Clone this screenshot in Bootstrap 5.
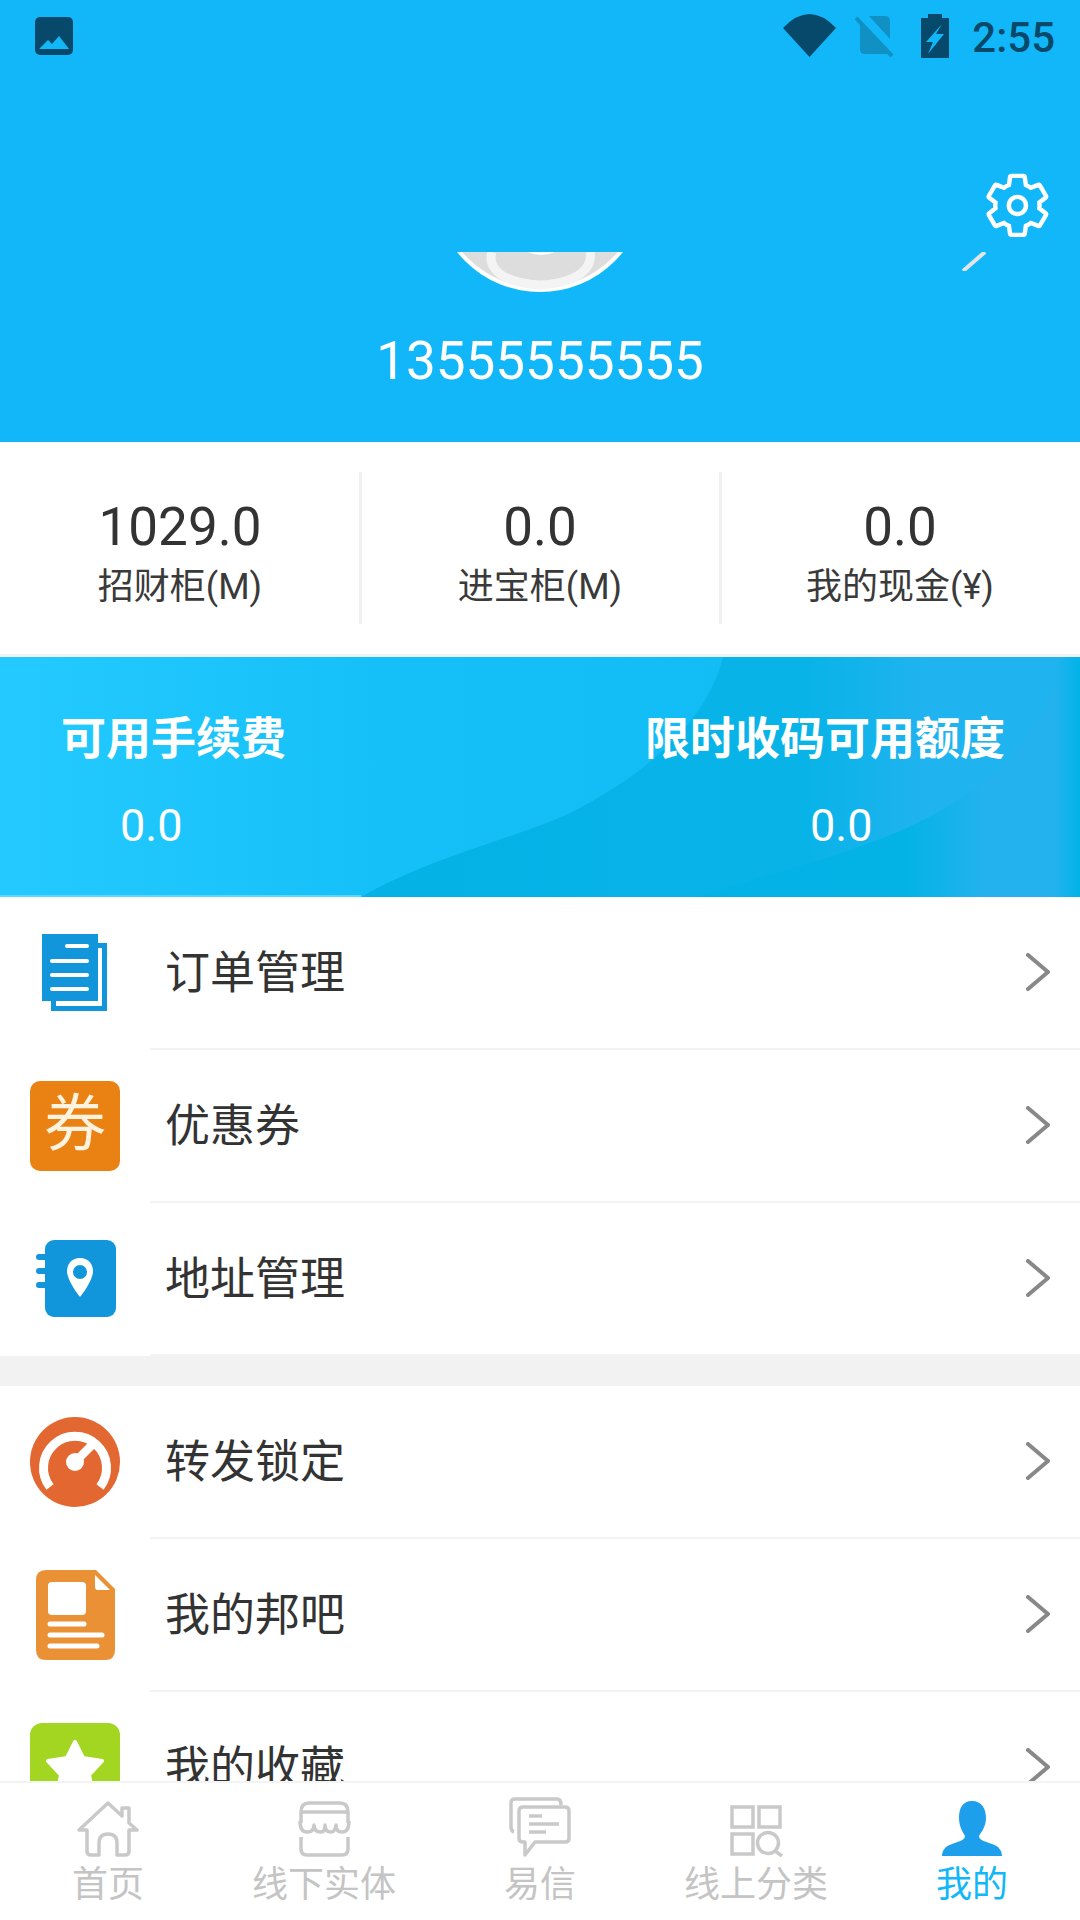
<!DOCTYPE html>
<html lang="zh-CN">
<head>
  <meta charset="UTF-8">
  <title>我的</title>
  <link href="https://cdn.jsdelivr.net/npm/bootstrap@5.3.2/dist/css/bootstrap.min.css" rel="stylesheet">
  <style>
    body {
      font-family: Roboto, "Noto Sans CJK SC", sans-serif;
      background-color: #fff;
      color: #333;
    }
    svg { display: block; }
    .app-page { width: 1080px; height: 1920px; }
    .app-scroll { height: 1781px; }

    .profile-head { height: 442px; background-color: #12b7f9; }
    .status-row { height: 72px; padding: 14px 25px 0 35px; }
    .status-photo { margin-top: 3px; }
    .status-time { font-size: 42px; font-weight: 500; line-height: 44px; color: #07496a; margin-left: 23px; margin-top: 2px; }
    .status-icons { gap: 19px; }
    .status-sim { margin-right: 8px; }
    .avatar-crop { width: 166px; margin-top: 180px; }
    .phone-text { margin-top: 37px; font-size: 53px; line-height: 64px; font-weight: 400; color: #fff; }
    .gear-icon { left: 982px; top: 170px; }
    .slash-mark { left: 962px; top: 252px; }

    .stat-wrap { height: 212px; padding-top: 30px; }
    .stat-cell { height: 152px; padding-top: 25px; text-align: center; }
    .stat-line::after { content: ""; position: absolute; top: 0; right: -2px; width: 3px; height: 152px; background-color: #f0f0f0; }
    .stat-num { font-size: 53px; line-height: 60px; color: #333; }
    .stat-label { font-size: 36px; line-height: 44px; margin-top: 8px; color: #3a3a3a; }
    .gap-strip { height: 3px; background-color: #f2f2f2; }

    .fee-banner { height: 240px; color: #fff; overflow: hidden; }
    .fee-art { left: 0; top: 0; }
    .fee-left { padding-left: 61px; }
    .fee-right { padding-right: 75px; }
    .fee-body { padding-top: 53px; }
    .fee-title { font-size: 45px; line-height: 60px; font-weight: 700; }
    .fee-value { font-size: 45px; line-height: 60px; margin-top: 26px; font-weight: 400; }
    .fee-left .fee-value { margin-left: 59px; }
    .fee-right .fee-value { margin-left: 165px; }

    .menu-row { height: 153px; padding: 0; border: 0; border-radius: 0 !important; }
    .menu-icon { width: 150px; flex: 0 0 150px; padding-bottom: 2px; }
    .menu-icon-shift { margin-left: 2px; }
    .menu-body { height: 153px; padding: 0 30px 2px 15px; border-bottom: 2px solid #f3f3f3; font-size: 45px; color: #333; }
    .menu-text { padding-top: 4px; }
    .coupon-icon { width: 90px; height: 90px; border-radius: 10px; background-color: #e98212; color: #fff3e0; font-size: 62px; line-height: 88px; text-align: center; font-weight: 400; }
    .menu-gap { height: 30px; background-color: #f2f2f2; }

    .tab-strip { height: 139px; border-top: 2px solid #f3f3f3; background-color: #fff; }
    .tab-item { width: 216px; height: 137px; color: #c4c4c4; font-size: 36px; line-height: 40px; }
    .tab-item.is-active { color: #12b7f9; }
    .tab-glyph { height: 64px; margin-top: 10px; margin-bottom: 8px; filter: blur(.4px); }
  </style>
</head>
<body>

<div class="app-page d-flex flex-column overflow-hidden">
  <div class="app-scroll overflow-hidden">

    <div class="profile-head position-relative">
      <div class="status-row d-flex justify-content-between align-items-start">
        <svg class="status-photo" width="38" height="38" viewBox="0 0 38 38"><rect width="38" height="38" rx="5" fill="#07496a"/><path d="M4 32 13 23 17 27 24 19 34 32Z" fill="#12b7f9"/></svg>
        <div class="d-flex align-items-start">
          <div class="status-icons d-flex">
            <svg width="53" height="43" viewBox="0 0 53 43"><path d="M0 14Q26.500-14 53 14L26.500 43Z" fill="#07496a"/></svg>
            <svg class="status-sim" width="39" height="44" viewBox="0 0 39 44"><path d="M12 2H30Q35 2 35 7V40H10Q5 40 5 35V9Z" fill="#1190c4"/><path d="M6 0 41 38" stroke="#12b7f9" stroke-width="9"/><path d="M1 4 37 42" stroke="#1190c4" stroke-width="4"/></svg>
            <svg width="28" height="44" viewBox="0 0 28 44"><path d="M7 0H21V4H28V44H0V4H7Z" fill="#07496a"/><path d="M21 10 5 28H12L7 40 23 20H15Z" fill="#12b7f9"/></svg>
          </div>
          <span class="status-time">2:55</span>
        </div>
      </div>

      <div class="avatar-crop mx-auto">
        <svg width="166" height="40" viewBox="0 0 166 40">
          <circle cx="83" cy="-66" r="106" fill="#fff"/>
          <circle cx="83" cy="-66" r="102" fill="#ddd"/>
          <path d="M35 0C30 16 45 31 83 33 121 31 136 16 133 0" fill="none" stroke="#f4f4f4" stroke-width="9"/>
          <path d="M71 0Q84 6 98 0Z" fill="#fff"/>
        </svg>
      </div>
      <div class="phone-text text-center">13555555555</div>

      <svg class="gear-icon position-absolute" width="68" height="67" viewBox="0 0 23.050 22.710"><path d="M19.430 12.980c.04-.32.07-.64.07-.98s-.03-.66-.07-.98l2.110-1.650c.19-.15.24-.42.12-.64l-2-3.460c-.12-.22-.39-.3-.61-.22l-2.490 1c-.52-.4-1.080-.73-1.690-.98l-.38-2.650C14.460 2.180 14.250 2 14 2h-4c-.25 0-.46.18-.49.42l-.38 2.650c-.61.25-1.170.59-1.690.98l-2.490-1c-.23-.09-.49 0-.61.22l-2 3.460c-.13.22-.07.49.12.64l2.110 1.650c-.04.32-.07.65-.07.98s.03.66.07.98l-2.110 1.650c-.19.15-.24.42-.12.64l2 3.460c.12.22.39.3.61.22l2.490-1c.52.4 1.080.73 1.690.98l.38 2.650c.03.24.24.42.49.42h4c.25 0 .46-.18.49-.42l.38-2.650c.61-.25 1.170-.59 1.690-.98l2.490 1c.23.09.49 0 .61-.22l2-3.460c.12-.22.07-.49-.12-.64l-2.110-1.650z" fill="none" stroke="#fff" stroke-width="1.500"/><circle cx="12" cy="12" r="2.900" fill="none" stroke="#fff" stroke-width="1.500"/></svg>
      <svg class="slash-mark position-absolute" width="24" height="19" viewBox="0 0 24 19"><path d="M23 0 1 19" stroke="#e4e4e4" stroke-width="4"/></svg>
    </div>

    <div class="stat-wrap">
      <div class="row g-0">
        <div class="col-4 stat-cell stat-line position-relative"><div class="stat-num">1029.0</div><div class="stat-label">招财柜(M)</div></div>
        <div class="col-4 stat-cell stat-line position-relative"><div class="stat-num">0.0</div><div class="stat-label">进宝柜(M)</div></div>
        <div class="col-4 stat-cell"><div class="stat-num">0.0</div><div class="stat-label">我的现金(¥)</div></div>
      </div>
    </div>
    <div class="gap-strip"></div>

    <div class="fee-banner position-relative">
      <svg class="fee-art position-absolute" width="1080" height="240" viewBox="0 0 1080 240">
        <defs>
          <linearGradient id="fee-base" x1="0" x2="1" y1="0" y2="0"><stop offset="0" stop-color="#24caff"/><stop offset=".35" stop-color="#15c0f8"/><stop offset="1" stop-color="#0fb9f3"/></linearGradient>
          <linearGradient id="fee-wave" x1="0" x2="1" y1="0" y2="0"><stop offset="0" stop-color="#04b2e6"/><stop offset=".62" stop-color="#08b3e8"/><stop offset=".78" stop-color="#1fb3ef"/><stop offset="1" stop-color="#1fb3ef"/></linearGradient>
          <linearGradient id="fee-front" x1="0" x2="1" y1="0" y2="0"><stop offset="0" stop-color="#03b2e6"/><stop offset=".55" stop-color="#04b3e6"/><stop offset=".75" stop-color="#24b2ef"/><stop offset=".93" stop-color="#24b2ef"/><stop offset="1" stop-color="#00b4e8"/></linearGradient>
        </defs>
        <rect width="1080" height="240" fill="url(#fee-base)"/>
        <rect y="238" width="361" height="2" fill="#5cd8ff"/>
        <path d="M361 240C430 200 520 180 572 155 640 120 705 70 723 0H1080V240Z" fill="url(#fee-wave)"/>
        <path d="M699 240C790 210 860 195 923 163 980 135 1050 80 1060 0H1080V240Z" fill="url(#fee-front)"/>
      </svg>
      <div class="fee-body position-relative d-flex justify-content-between">
        <div class="fee-left"><div class="fee-title">可用手续费</div><div class="fee-value">0.0</div></div>
        <div class="fee-right"><div class="fee-title">限时收码可用额度</div><div class="fee-value">0.0</div></div>
      </div>
    </div>

    <div class="list-group list-group-flush">
      <div class="list-group-item menu-row d-flex align-items-center">
        <div class="menu-icon d-flex justify-content-center">
          <svg width="66" height="78" viewBox="0 0 66 78"><rect x="9" y="9" width="56" height="68" fill="#1296db"/><rect x="14" y="14" width="46" height="58" fill="#fff"/><rect x="0" y="0" width="56" height="67" fill="#1296db"/><g stroke="#fff" stroke-width="4" stroke-linecap="round"><path d="M25 12H45M10 27H45M10 41H45M10 55H45"/></g></svg>
        </div>
        <div class="menu-body flex-grow-1 d-flex justify-content-between align-items-center"><span class="menu-text">订单管理</span><svg width="24" height="38" viewBox="0 0 24 38"><path d="M2 2 22 19 2 36" fill="none" stroke="#888" stroke-width="4" stroke-linecap="round" stroke-linejoin="round"/></svg></div>
      </div>
      <div class="list-group-item menu-row d-flex align-items-center">
        <div class="menu-icon d-flex justify-content-center"><div class="coupon-icon">券</div></div>
        <div class="menu-body flex-grow-1 d-flex justify-content-between align-items-center"><span class="menu-text">优惠券</span><svg width="24" height="38" viewBox="0 0 24 38"><path d="M2 2 22 19 2 36" fill="none" stroke="#888" stroke-width="4" stroke-linecap="round" stroke-linejoin="round"/></svg></div>
      </div>
      <div class="list-group-item menu-row d-flex align-items-center">
        <div class="menu-icon d-flex justify-content-center">
          <svg class="menu-icon-shift" width="80" height="77" viewBox="0 0 80 77"><rect x="9" width="71" height="77" rx="9" fill="#1296db"/><g stroke="#1296db" stroke-width="6" stroke-linecap="round"><path d="M3 17H12M3 31H12M3 45H12"/></g><path d="M44 18C35 18 31 25 31 31 31 41 44 57 44 57 44 57 57 41 57 31 57 25 53 18 44 18Z" fill="#fff"/><circle cx="44" cy="32" r="7" fill="#1296db"/></svg>
        </div>
        <div class="menu-body flex-grow-1 d-flex justify-content-between align-items-center"><span class="menu-text">地址管理</span><svg width="24" height="38" viewBox="0 0 24 38"><path d="M2 2 22 19 2 36" fill="none" stroke="#888" stroke-width="4" stroke-linecap="round" stroke-linejoin="round"/></svg></div>
      </div>
    </div>

    <div class="menu-gap"></div>

    <div class="list-group list-group-flush">
      <div class="list-group-item menu-row d-flex align-items-center">
        <div class="menu-icon d-flex justify-content-center">
          <svg width="90" height="90" viewBox="0 0 90 90"><circle cx="45" cy="45" r="45" fill="#e26731"/><path d="M20 70A31.500 31.500 0 1 1 70 70" fill="none" stroke="#fff" stroke-width="9"/><path d="M42 42 48 48 67 29 61 23Z" fill="#fff"/><circle cx="45" cy="45" r="9" fill="#fff"/></svg>
        </div>
        <div class="menu-body flex-grow-1 d-flex justify-content-between align-items-center"><span class="menu-text">转发锁定</span><svg width="24" height="38" viewBox="0 0 24 38"><path d="M2 2 22 19 2 36" fill="none" stroke="#888" stroke-width="4" stroke-linecap="round" stroke-linejoin="round"/></svg></div>
      </div>
      <div class="list-group-item menu-row d-flex align-items-center">
        <div class="menu-icon d-flex justify-content-center">
          <svg class="menu-icon-shift" width="80" height="90" viewBox="0 0 80 90"><path d="M10 0H60L79 19V80Q79 90 69 90H10Q0 90 0 80V10Q0 0 10 0Z" fill="#ea9035"/><path d="M59 5 74 20H62Q59 20 59 17Z" fill="#fff"/><rect x="12" y="12" width="38" height="33" rx="4" fill="#fff"/><g stroke="#fff" stroke-width="5" stroke-linecap="round"><path d="M14 54H48M14 65H66M14 76H61"/></g></svg>
        </div>
        <div class="menu-body flex-grow-1 d-flex justify-content-between align-items-center"><span class="menu-text">我的邦吧</span><svg width="24" height="38" viewBox="0 0 24 38"><path d="M2 2 22 19 2 36" fill="none" stroke="#888" stroke-width="4" stroke-linecap="round" stroke-linejoin="round"/></svg></div>
      </div>
      <div class="list-group-item menu-row d-flex align-items-center">
        <div class="menu-icon d-flex justify-content-center">
          <svg width="90" height="90" viewBox="0 0 90 90"><rect width="90" height="90" rx="12" fill="#a2d620"/><path d="M45 19 53 35 72 38 59 52 63 72 45 62 27 72 31 52 18 38 37 35Z" fill="#fff" stroke="#fff" stroke-width="4" stroke-linejoin="round"/></svg>
        </div>
        <div class="menu-body flex-grow-1 d-flex justify-content-between align-items-center"><span class="menu-text">我的收藏</span><svg width="24" height="38" viewBox="0 0 24 38"><path d="M2 2 22 19 2 36" fill="none" stroke="#888" stroke-width="4" stroke-linecap="round" stroke-linejoin="round"/></svg></div>
      </div>
    </div>
  </div>

  <nav class="tab-strip d-flex">
    <div class="tab-item d-flex flex-column align-items-center">
      <div class="tab-glyph d-flex align-items-end">
        <svg width="62" height="56" viewBox="0 0 62 56"><path d="M2 29 31 2 45 15V7H52V22L60 29H52V50Q52 54 48 54H40V42Q40 33 31 33 22 33 22 42V54H14Q10 54 10 50V29Z" fill="none" stroke="#c9c9c9" stroke-width="3.500" stroke-linejoin="round"/></svg>
      </div>
      <span>首页</span>
    </div>
    <div class="tab-item d-flex flex-column align-items-center">
      <div class="tab-glyph d-flex align-items-end">
        <svg width="55" height="56" viewBox="0 0 55 56"><path d="M4 22V11Q4 2 12 2H43Q51 2 51 11V22M4 11H51" fill="none" stroke="#c9c9c9" stroke-width="3.500"/><path d="M3 20Q3 31 10 31 17 31 17 24 17 31 24 31 28 31 28 24 28 31 34 31 38 31 39 24 39 31 45 31 52 31 52 20" fill="none" stroke="#c9c9c9" stroke-width="3.500" stroke-linejoin="round"/><path d="M4 36V48Q4 54 10 54H45Q51 54 51 48V36" fill="none" stroke="#c9c9c9" stroke-width="3.500"/></svg>
      </div>
      <span>线下实体</span>
    </div>
    <div class="tab-item d-flex flex-column align-items-center">
      <div class="tab-glyph d-flex align-items-end">
        <svg width="62" height="60" viewBox="0 0 62 60"><path d="M5 35Q2 34 2 30V6Q2 2 6 2H48Q52 2 52 8" fill="none" stroke="#c9c9c9" stroke-width="3.500"/><path d="M14 10H56Q60 10 60 14V41Q60 45 56 45H26L16 58V45H14Q10 45 10 41V14Q10 10 14 10Z" fill="none" stroke="#c9c9c9" stroke-width="3.500" stroke-linejoin="round"/><path d="M20 19H33M20 27H50M20 35H37" stroke="#c9c9c9" stroke-width="3.500"/></svg>
      </div>
      <span>易信</span>
    </div>
    <div class="tab-item d-flex flex-column align-items-center">
      <div class="tab-glyph d-flex align-items-end">
        <svg width="53" height="52" viewBox="0 0 53 52"><g fill="none" stroke="#c9c9c9" stroke-width="3.500"><rect x="2" y="2" width="21" height="20"/><rect x="29" y="2" width="21" height="20"/><rect x="2" y="29" width="21" height="20"/><circle cx="38" cy="38" r="10.500"/><path d="M45 46 52 51"/></g></svg>
      </div>
      <span>线上分类</span>
    </div>
    <div class="tab-item is-active d-flex flex-column align-items-center">
      <div class="tab-glyph d-flex align-items-end">
        <svg width="60" height="56" viewBox="0 0 60 56"><path d="M30 0C20 0 17 8 17 17 17 26 21 31 23 35 23 39 18 40 10 43 3 45 0 50 0 55H60C60 50 57 45 50 43 42 40 37 39 37 35 39 31 44 26 44 17 44 8 40 0 30 0Z" fill="#1e9feb"/></svg>
      </div>
      <span>我的</span>
    </div>
  </nav>
</div>

<script src="https://cdn.jsdelivr.net/npm/bootstrap@5.3.2/dist/js/bootstrap.bundle.min.js"></script>
</body>
</html>
